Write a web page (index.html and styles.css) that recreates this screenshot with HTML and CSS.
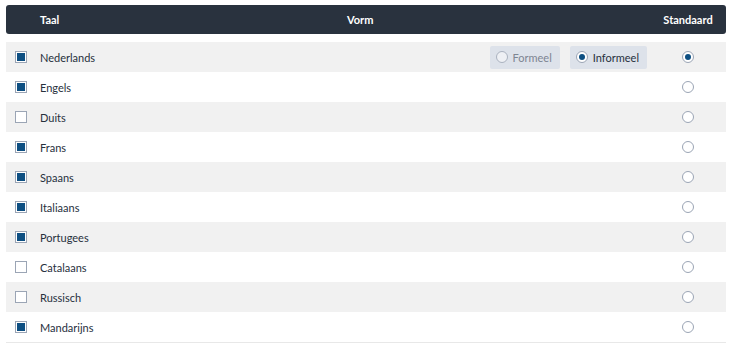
FILE: index.html
```html
<!DOCTYPE html>
<html lang="nl">
  <head>
    <meta charset="UTF-8" />
    <meta name="viewport" content="width=device-width, initial-scale=1.0" />
    <title>Talen</title>
    <link rel="stylesheet" href="styles.css">
  </head>
  <body>
    <div class="table">
      <div class="head">
        <div></div>
        <div class="head-taal">Taal</div>
        <div class="head-vorm">Vorm</div>
        <div class="head-std">Standaard</div>
      </div>
      <div class="rows">
        <div class="row">
          <span class="check on"></span>
          <span class="name">Nederlands</span>
          <span class="vorm">
            <span class="btn disabled"><span class="radio"></span>Formeel</span>
            <span class="btn"><span class="radio on"></span>Informeel</span>
          </span>
          <span class="std"><span class="radio on"></span></span>
        </div>
        <div class="row">
          <span class="check on"></span>
          <span class="name">Engels</span>
          <span class="vorm"></span>
          <span class="std"><span class="radio"></span></span>
        </div>
        <div class="row">
          <span class="check"></span>
          <span class="name">Duits</span>
          <span class="vorm"></span>
          <span class="std"><span class="radio"></span></span>
        </div>
        <div class="row">
          <span class="check on"></span>
          <span class="name">Frans</span>
          <span class="vorm"></span>
          <span class="std"><span class="radio"></span></span>
        </div>
        <div class="row">
          <span class="check on"></span>
          <span class="name">Spaans</span>
          <span class="vorm"></span>
          <span class="std"><span class="radio"></span></span>
        </div>
        <div class="row">
          <span class="check on"></span>
          <span class="name">Italiaans</span>
          <span class="vorm"></span>
          <span class="std"><span class="radio"></span></span>
        </div>
        <div class="row">
          <span class="check on"></span>
          <span class="name">Portugees</span>
          <span class="vorm"></span>
          <span class="std"><span class="radio"></span></span>
        </div>
        <div class="row">
          <span class="check"></span>
          <span class="name">Catalaans</span>
          <span class="vorm"></span>
          <span class="std"><span class="radio"></span></span>
        </div>
        <div class="row">
          <span class="check"></span>
          <span class="name">Russisch</span>
          <span class="vorm"></span>
          <span class="std"><span class="radio"></span></span>
        </div>
        <div class="row">
          <span class="check on"></span>
          <span class="name">Mandarijns</span>
          <span class="vorm"></span>
          <span class="std"><span class="radio"></span></span>
        </div>
      </div>
    </div>
  </body>
</html>
```

FILE: styles.css
```css
body {
  margin: 0;
  padding: 5px 5px 0 6px;
  background: #fff;
  font-family: Lato, "Liberation Sans", sans-serif;
  font-size: 11px;
  color: #27303d;
}

.head,
.row {
  display: grid;
  grid-template-columns: 34px 1fr 1fr 76px;
  align-items: center;
}

.head {
  height: 29px;
  background: #29323e;
  border-radius: 3px;
  color: #fff;
  font-weight: bold;
  margin-bottom: 8px;
}

.head-vorm {
  padding-left: 2px;
}

.head-std {
  text-align: center;
}

.row {
  height: 30px;
}

.row:nth-child(odd) {
  background: #f1f1f1;
}

.row:last-child {
  border-bottom: 1px solid #e8e8e8;
}

.check {
  justify-self: start;
  margin-left: 9px;
  width: 12px;
  height: 12px;
  box-sizing: border-box;
  border: 1px solid #9ba5b5;
  background: #fff;
  padding: 1px;
}

.check.on::after {
  content: "";
  display: block;
  width: 8px;
  height: 8px;
  background: #0d4f82;
}

.vorm {
  display: flex;
  justify-content: flex-end;
  gap: 10px;
  padding-right: 3px;
}

.btn {
  display: flex;
  align-items: center;
  gap: 5px;
  height: 23px;
  padding: 0 8px 0 6px;
  background: #dde2ea;
  border-radius: 2px;
}

.btn.disabled {
  color: #7d8592;
}

.btn.disabled .radio {
  border-color: #aab2bf;
  background: #eef0f4;
}

.radio {
  display: block;
  width: 12px;
  height: 12px;
  box-sizing: border-box;
  border: 1px solid #9ba5b5;
  border-radius: 50%;
  background: #fff;
  padding: 2px;
}

.radio.on::after {
  content: "";
  display: block;
  width: 6px;
  height: 6px;
  border-radius: 50%;
  background: #0d4f82;
}

.std {
  display: flex;
  justify-content: center;
}
```
